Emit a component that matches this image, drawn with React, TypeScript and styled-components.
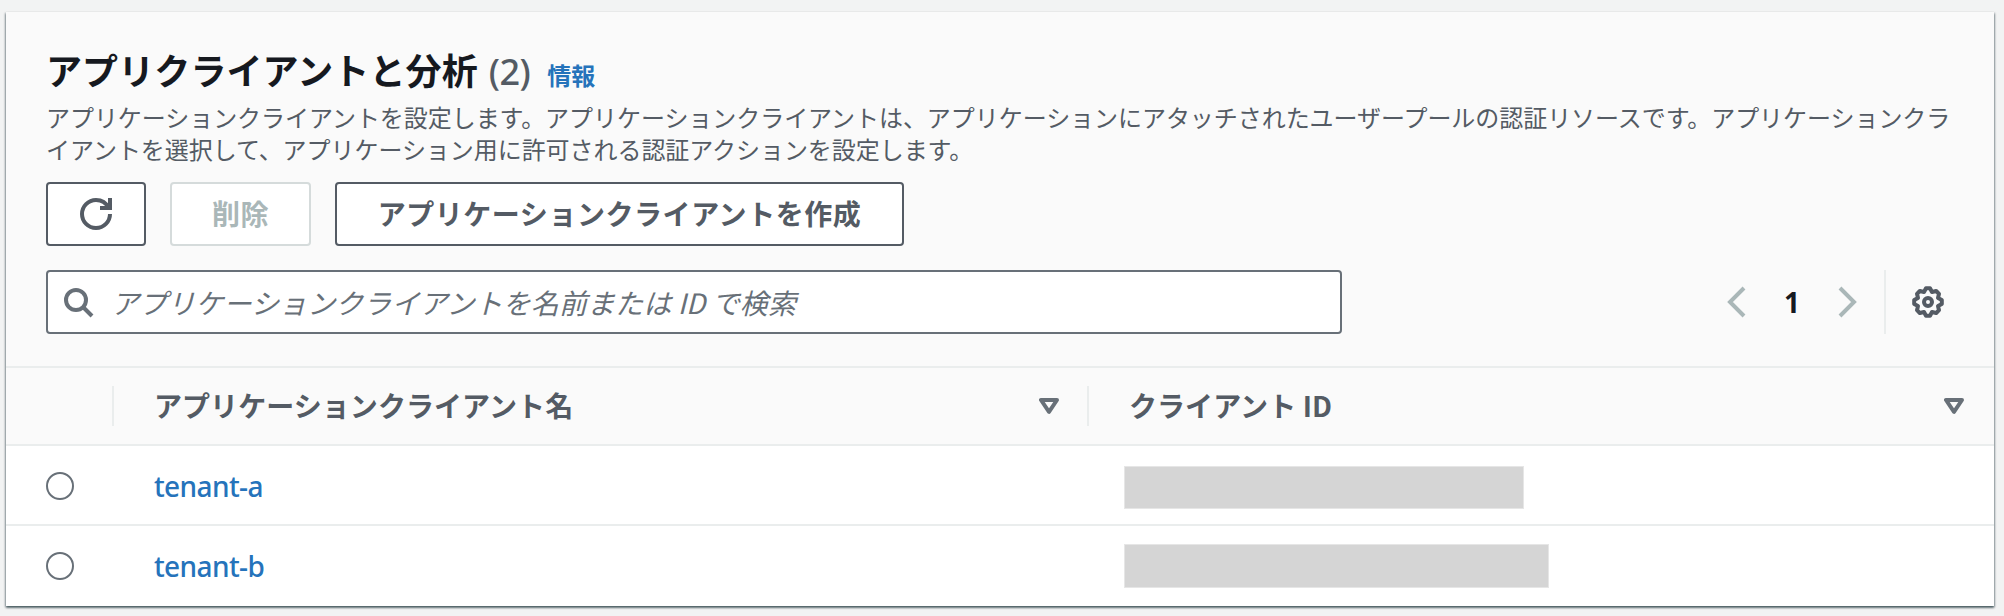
import React from "react";
import styled, { createGlobalStyle } from "styled-components";

const GlobalStyle = createGlobalStyle`
  * { box-sizing: border-box; }
  body {
    margin: 0;
    background: #f2f3f3;
    font-family: "Noto Sans", "Noto Sans CJK JP", sans-serif;
    color: #16191f;
  }
`;

const Page = styled.main`
  height: 616px;
  padding: 12px 10px 10px 6px;
`;

const Panel = styled.section`
  height: 594px;
  background: #fff;
  box-shadow: 0 2px 2px 0 rgba(0, 28, 36, 0.45), 1px 1px 2px 0 rgba(0, 28, 36, 0.3), -1px 1px 2px 0 rgba(0, 28, 36, 0.3);
`;

const Header = styled.header`
  height: 354px;
  padding: 31px 40px 0;
  background: #fafafa;
`;

const TitleRow = styled.div`
  display: flex;
  align-items: baseline;
  height: 52px;
  line-height: 52px;
  white-space: nowrap;
`;

const Title = styled.h1`
  margin: 0;
  font-family: "Noto Sans CJK JP", sans-serif;
  font-size: 36px;
  font-weight: 700;
  line-height: 52px;
  letter-spacing: 0.1px;
`;

const Counter = styled.span`
  margin-left: 11px;
  font-family: "Noto Sans", sans-serif;
  font-size: 36px;
  font-weight: 500;
  letter-spacing: -0.5px;
  color: #545b64;
`;

const InfoLink = styled.a`
  margin-left: 17px;
  font-family: "Noto Sans CJK JP", sans-serif;
  font-size: 24px;
  font-weight: 700;
  color: #2573bb;
`;

const Description = styled.p`
  margin: 6px 0 0;
  font-family: "Noto Sans CJK JP", sans-serif;
  font-size: 24px;
  line-height: 32px;
  letter-spacing: -0.05px;
  white-space: nowrap;
  color: #545b64;
`;

const Actions = styled.div`
  display: flex;
  gap: 24px;
  margin-top: 17px;
`;

const Button = styled.button<{ $width: number }>`
  display: flex;
  align-items: center;
  justify-content: center;
  width: ${(p) => p.$width}px;
  height: 64px;
  padding: 0 0 2px;
  border: 2px solid #545b64;
  border-radius: 4px;
  background: #fff;
  color: #545b64;
  font-family: "Noto Sans CJK JP", sans-serif;
  font-size: 28px;
  font-weight: 700;
  line-height: 40px;
  letter-spacing: 0.55px;
  white-space: nowrap;
  &:disabled {
    border-color: #d5dbdb;
    color: #aab7b8;
  }
`;

const IconButton = styled(Button)`
  padding: 0;
`;

const Tools = styled.div`
  display: flex;
  justify-content: space-between;
  margin-top: 24px;
`;

const SearchBox = styled.div`
  display: flex;
  align-items: center;
  width: 1296px;
  height: 64px;
  padding-left: 14px;
  border: 2px solid #687078;
  border-radius: 4px;
  background: #fff;
  color: #687078;
`;

const SearchInput = styled.input`
  flex: 1;
  height: 60px;
  margin-left: 17px;
  padding: 0;
  border: 0;
  outline: 0;
  background: transparent;
  font-family: "Noto Sans CJK JP", sans-serif;
  font-size: 28px;
  letter-spacing: 0.1px;
  &::placeholder {
    color: #687078;
    font-style: italic;
    opacity: 1;
  }
`;

const Pager = styled.div`
  display: flex;
  align-items: center;
  height: 64px;
  color: #aab7b8;
`;

const PageNumber = styled.span`
  width: 78px;
  text-align: center;
  font-size: 28px;
  font-weight: 700;
  color: #16191f;
`;

const Preferences = styled.div`
  display: flex;
  align-items: center;
  height: 64px;
  margin-left: 21px;
  padding: 0 10px 0 26px;
  border-left: 2px solid #eaeded;
  color: #545b64;
`;

const Icon = styled.svg`
  display: block;
  flex: none;
  width: 32px;
  height: 32px;
  fill: none;
  stroke: currentColor;
  stroke-width: 2;
`;

const columns = "106px 975px 1fr";

const HeadRow = styled.div`
  display: grid;
  grid-template-columns: ${columns};
  align-items: center;
  height: 80px;
  border-top: 2px solid #eaeded;
  border-bottom: 2px solid #eaeded;
  background: #fafafa;
`;

const HeadCell = styled.div<{ $end: number }>`
  display: flex;
  align-items: center;
  justify-content: space-between;
  height: 40px;
  padding: 0 ${(p) => p.$end}px 0 40px;
  border-left: 2px solid #eaeded;
  font-family: "Noto Sans CJK JP", sans-serif;
  font-size: 28px;
  font-weight: 700;
  line-height: 40px;
  letter-spacing: 0.06px;
  white-space: nowrap;
  color: #545b64;
`;

const HeadLabel = styled.span`
  padding-bottom: 2px;
`;

const SortIcon = styled.svg`
  display: block;
  width: 20px;
  height: 16px;
  fill: none;
  stroke: #687078;
  stroke-width: 4;
  stroke-linejoin: round;
`;

const Row = styled.div`
  display: grid;
  grid-template-columns: ${columns};
  height: 80px;
  border-bottom: 2px solid #eaeded;
  &:last-child { border-bottom: 0; }
`;

const RadioCell = styled.div`
  padding: 26px 0 0 40px;
`;

const Radio = styled.span`
  display: block;
  width: 28px;
  height: 28px;
  border: 2px solid #687078;
  border-radius: 50%;
`;

const NameCell = styled.div`
  padding: 20px 0 0 42px;
`;

const ClientLink = styled.a`
  font-size: 28px;
  font-weight: 500;
  line-height: 40px;
  letter-spacing: -0.6px;
  color: #2573bb;
`;

const IdCell = styled.div<{ $top: number }>`
  padding: ${(p) => p.$top}px 0 0 37px;
`;

const Redacted = styled.div<{ $width: number; $height: number }>`
  width: ${(p) => p.$width}px;
  height: ${(p) => p.$height}px;
  border: 1px solid #e6e6e6;
  background: #d5d5d5;
`;

const clients = [
  { name: "tenant-a", top: 20, width: 400, height: 43 },
  { name: "tenant-b", top: 18, width: 425, height: 44 },
];

const Sort = () => (
  <SortIcon viewBox="0 0 20 16">
    <path d="M2 2h16l-8 11.8z" />
  </SortIcon>
);

export default function App() {
  return (
    <>
      <GlobalStyle />
      <Page>
        <Panel>
          <Header>
            <TitleRow>
              <Title>アプリクライアントと分析</Title>
              <Counter>(2)</Counter>
              <InfoLink>情報</InfoLink>
            </TitleRow>
            <Description>
              アプリケーションクライアントを設定します。アプリケーションクライアントは、アプリケーションにアタッチされたユーザープールの認証リソースです。アプリケーションクラ
              <br />
              イアントを選択して、アプリケーション用に許可される認証アクションを設定します。
            </Description>
            <Actions>
              <IconButton $width={100} aria-label="更新">
                <Icon viewBox="0 0 16 16">
                  <path d="M15 8c0 3.87-3.13 7-7 7s-7-3.13-7-7 3.13-7 7-7c2.79 0 5.2 1.63 6.33 4" />
                  <path d="M10 5h5V0" />
                </Icon>
              </IconButton>
              <Button $width={141} disabled>削除</Button>
              <Button $width={569}>アプリケーションクライアントを作成</Button>
            </Actions>
            <Tools>
              <SearchBox>
                <Icon viewBox="0 0 16 16">
                  <circle cx="7" cy="7" r="5" />
                  <path d="m15 15-4.5-4.5" />
                </Icon>
                <SearchInput placeholder="アプリケーションクライアントを名前または ID で検索" />
              </SearchBox>
              <Pager>
                <Icon viewBox="0 0 16 16">
                  <path d="M11.5 1 4.5 8l7 7" />
                </Icon>
                <PageNumber>1</PageNumber>
                <Icon viewBox="0 0 16 16">
                  <path d="m4.5 1 7 7-7 7" />
                </Icon>
                <Preferences>
                  <Icon viewBox="0 0 16 16">
                    <circle cx="8" cy="8" r="2" />
                    <path
                      strokeLinejoin="round"
                      d="M7 1.1H9L10 3 12.1 2.5 13.5 3.9 13 6 14.9 7V9L13 10 13.5 12.1 12.1 13.5 10 13 9 14.9H7L6 13 3.9 13.5 2.5 12.1 3 10 1.1 9V7L3 6 2.5 3.9 3.9 2.5 6 3z"
                    />
                  </Icon>
                </Preferences>
              </Pager>
            </Tools>
          </Header>
          <HeadRow>
            <span />
            <HeadCell $end={28}>
              <HeadLabel>アプリケーションクライアント名</HeadLabel>
              <Sort />
            </HeadCell>
            <HeadCell $end={30}>
              <HeadLabel>クライアント ID</HeadLabel>
              <Sort />
            </HeadCell>
          </HeadRow>
          {clients.map((c) => (
            <Row key={c.name}>
              <RadioCell>
                <Radio />
              </RadioCell>
              <NameCell>
                <ClientLink>{c.name}</ClientLink>
              </NameCell>
              <IdCell $top={c.top}>
                <Redacted $width={c.width} $height={c.height} />
              </IdCell>
            </Row>
          ))}
        </Panel>
      </Page>
    </>
  );
}
